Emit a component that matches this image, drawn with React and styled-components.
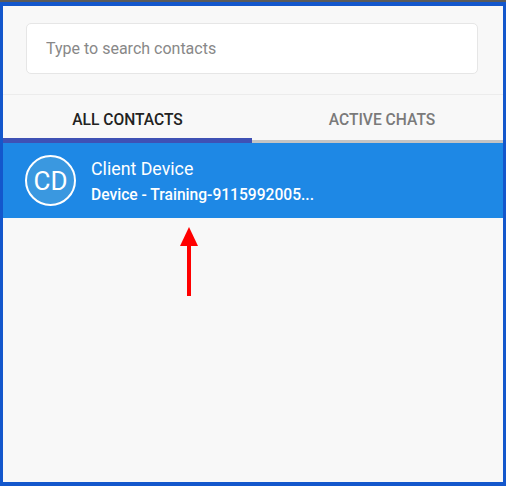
import styled, { createGlobalStyle } from 'styled-components';

const GlobalStyle = createGlobalStyle`
  html, body {
    margin: 0;
    padding: 0;
    background: #5b5b5b;
  }
  * {
    box-sizing: border-box;
  }
`;

const Screen = styled.div`
  padding-top: 2px;
  width: 506px;
  height: 486px;
  font-family: Roboto, 'Liberation Sans', Arial, sans-serif;
`;

const Frame = styled.div`
  height: 484px;
  border-style: solid;
  border-color: #1357cc;
  border-width: 4px 3px 4px 3px;
  background: #f8f8f8;
  display: flex;
  flex-direction: column;
`;

const SearchBar = styled.div`
  padding: 17px 25px 20px 23px;
  border-bottom: 1px solid #ececec;
`;

const SearchInput = styled.input`
  display: block;
  width: 100%;
  height: 51px;
  padding: 0 19px;
  border: 1px solid #e6e6e6;
  border-radius: 5px;
  background: #ffffff;
  font-family: inherit;
  font-size: 16px;
  color: #333;
  outline: none;
  &::placeholder {
    color: #888888;
  }
`;

const Tabs = styled.div`
  display: flex;
  height: 48px;
`;

const Tab = styled.div`
  flex: ${({ active }) => (active ? '0 0 249px' : '1')};
  display: flex;
  align-items: center;
  justify-content: center;
  padding-top: ${({ active }) => (active ? 6 : 4)}px;
  font-size: 15.6px;
  font-weight: 500;
  text-transform: uppercase;
  color: ${({ active }) => (active ? '#222222' : '#7a7a7a')};
  border-bottom: ${({ active }) => (active ? '5px solid #3f51b5' : '3px solid #c4c4c4')};
  padding-left: ${({ shift }) => shift || 0}px;
`;

const ContactRow = styled.div`
  display: flex;
  align-items: center;
  gap: 15px;
  height: 75px;
  padding-left: 22px;
  background: #1e88e5;
  color: #ffffff;
`;

const Avatar = styled.div`
  width: 51px;
  height: 51px;
  flex-shrink: 0;
  border-radius: 50%;
  border: 2px solid #ffffff;
  background: #3a98e0;
  display: flex;
  align-items: center;
  justify-content: center;
  font-size: 26px;
  padding-top: 1px;
`;

const ContactText = styled.div`
  display: flex;
  flex-direction: column;
  gap: 7px;
  padding-top: 1px;
`;

const Name = styled.div`
  font-size: 17.8px;
  line-height: 20px;
`;

const Subtitle = styled.div`
  font-size: 15.6px;
  font-weight: 500;
  line-height: 18px;
`;

const ArrowArea = styled.div`
  padding: 8px 0 0 175px;
`;

function UpArrow() {
  return (
    <svg width="22" height="72" viewBox="0 0 22 72">
      <polygon points="11,1 2,20 20,20" fill="#ff0000" />
      <rect x="9" y="19" width="4" height="51" fill="#ff0000" />
    </svg>
  );
}

export default function App() {
  return (
    <>
      <GlobalStyle />
      <Screen>
        <Frame>
          <SearchBar>
            <SearchInput placeholder="Type to search contacts" />
          </SearchBar>
          <Tabs>
            <Tab active>All Contacts</Tab>
            <Tab shift={9}>Active Chats</Tab>
          </Tabs>
          <ContactRow>
            <Avatar>CD</Avatar>
            <ContactText>
              <Name>Client Device</Name>
              <Subtitle>Device - Training-9115992005...</Subtitle>
            </ContactText>
          </ContactRow>
          <ArrowArea>
            <UpArrow />
          </ArrowArea>
        </Frame>
      </Screen>
    </>
  );
}
